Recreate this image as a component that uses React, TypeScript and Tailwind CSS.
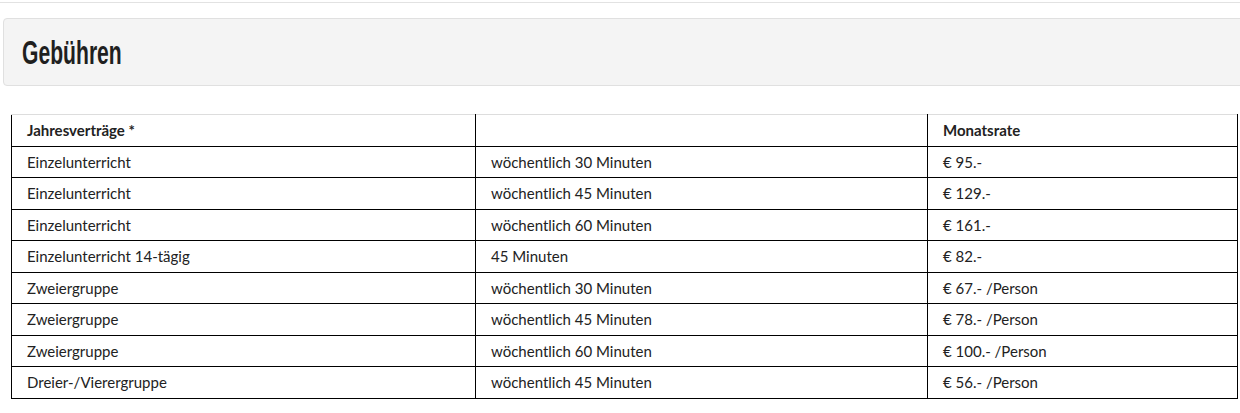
const rows = [
  ["Einzelunterricht", "wöchentlich 30 Minuten", "€ 95.-"],
  ["Einzelunterricht", "wöchentlich 45 Minuten", "€ 129.-"],
  ["Einzelunterricht", "wöchentlich 60 Minuten", "€ 161.-"],
  ["Einzelunterricht 14-tägig", "45 Minuten", "€ 82.-"],
  ["Zweiergruppe", "wöchentlich 30 Minuten", "€ 67.- /Person"],
  ["Zweiergruppe", "wöchentlich 45 Minuten", "€ 78.- /Person"],
  ["Zweiergruppe", "wöchentlich 60 Minuten", "€ 100.- /Person"],
  ["Dreier-/Vierergruppe", "wöchentlich 45 Minuten", "€ 56.- /Person"],
];

export default function App() {
  const cell = "border border-black pl-[15px] h-[31.5px] align-middle";
  return (
    <div className="min-h-[413px] bg-white overflow-hidden text-[#222] font-['Lato',sans-serif]">
      <div className="mt-[2px] border-t border-[#e2e2e2]" />
      <div className="mt-[15px] ml-[3px] -mr-4 h-[68px] rounded border border-[#e0e0e0] bg-[#f4f4f4] flex items-center pl-[18px]">
        <h1 className="font-['Liberation_Sans',sans-serif] font-bold text-[33px] leading-none text-[#1f1f1f] scale-x-[0.64] origin-left whitespace-nowrap">
          Gebühren
        </h1>
      </div>
      <div className="pl-[11px] pr-[2px] mt-[28px]">
        <table className="w-full border-collapse text-[15px] table-fixed">
          <colgroup>
            <col className="w-[464px]" />
            <col className="w-[452px]" />
            <col />
          </colgroup>
          <thead>
            <tr>
              <th className={`${cell} border-t-[#dddddd] text-left font-bold`}>Jahresverträge *</th>
              <th className={`${cell} border-t-[#dddddd]`}></th>
              <th className={`${cell} border-t-[#dddddd] text-left font-bold`}>Monatsrate</th>
            </tr>
          </thead>
          <tbody>
            {rows.map((r, i) => (
              <tr key={i}>
                {r.map((c, j) => (
                  <td key={j} className={cell}>{c}</td>
                ))}
              </tr>
            ))}
          </tbody>
        </table>
      </div>
    </div>
  );
}
